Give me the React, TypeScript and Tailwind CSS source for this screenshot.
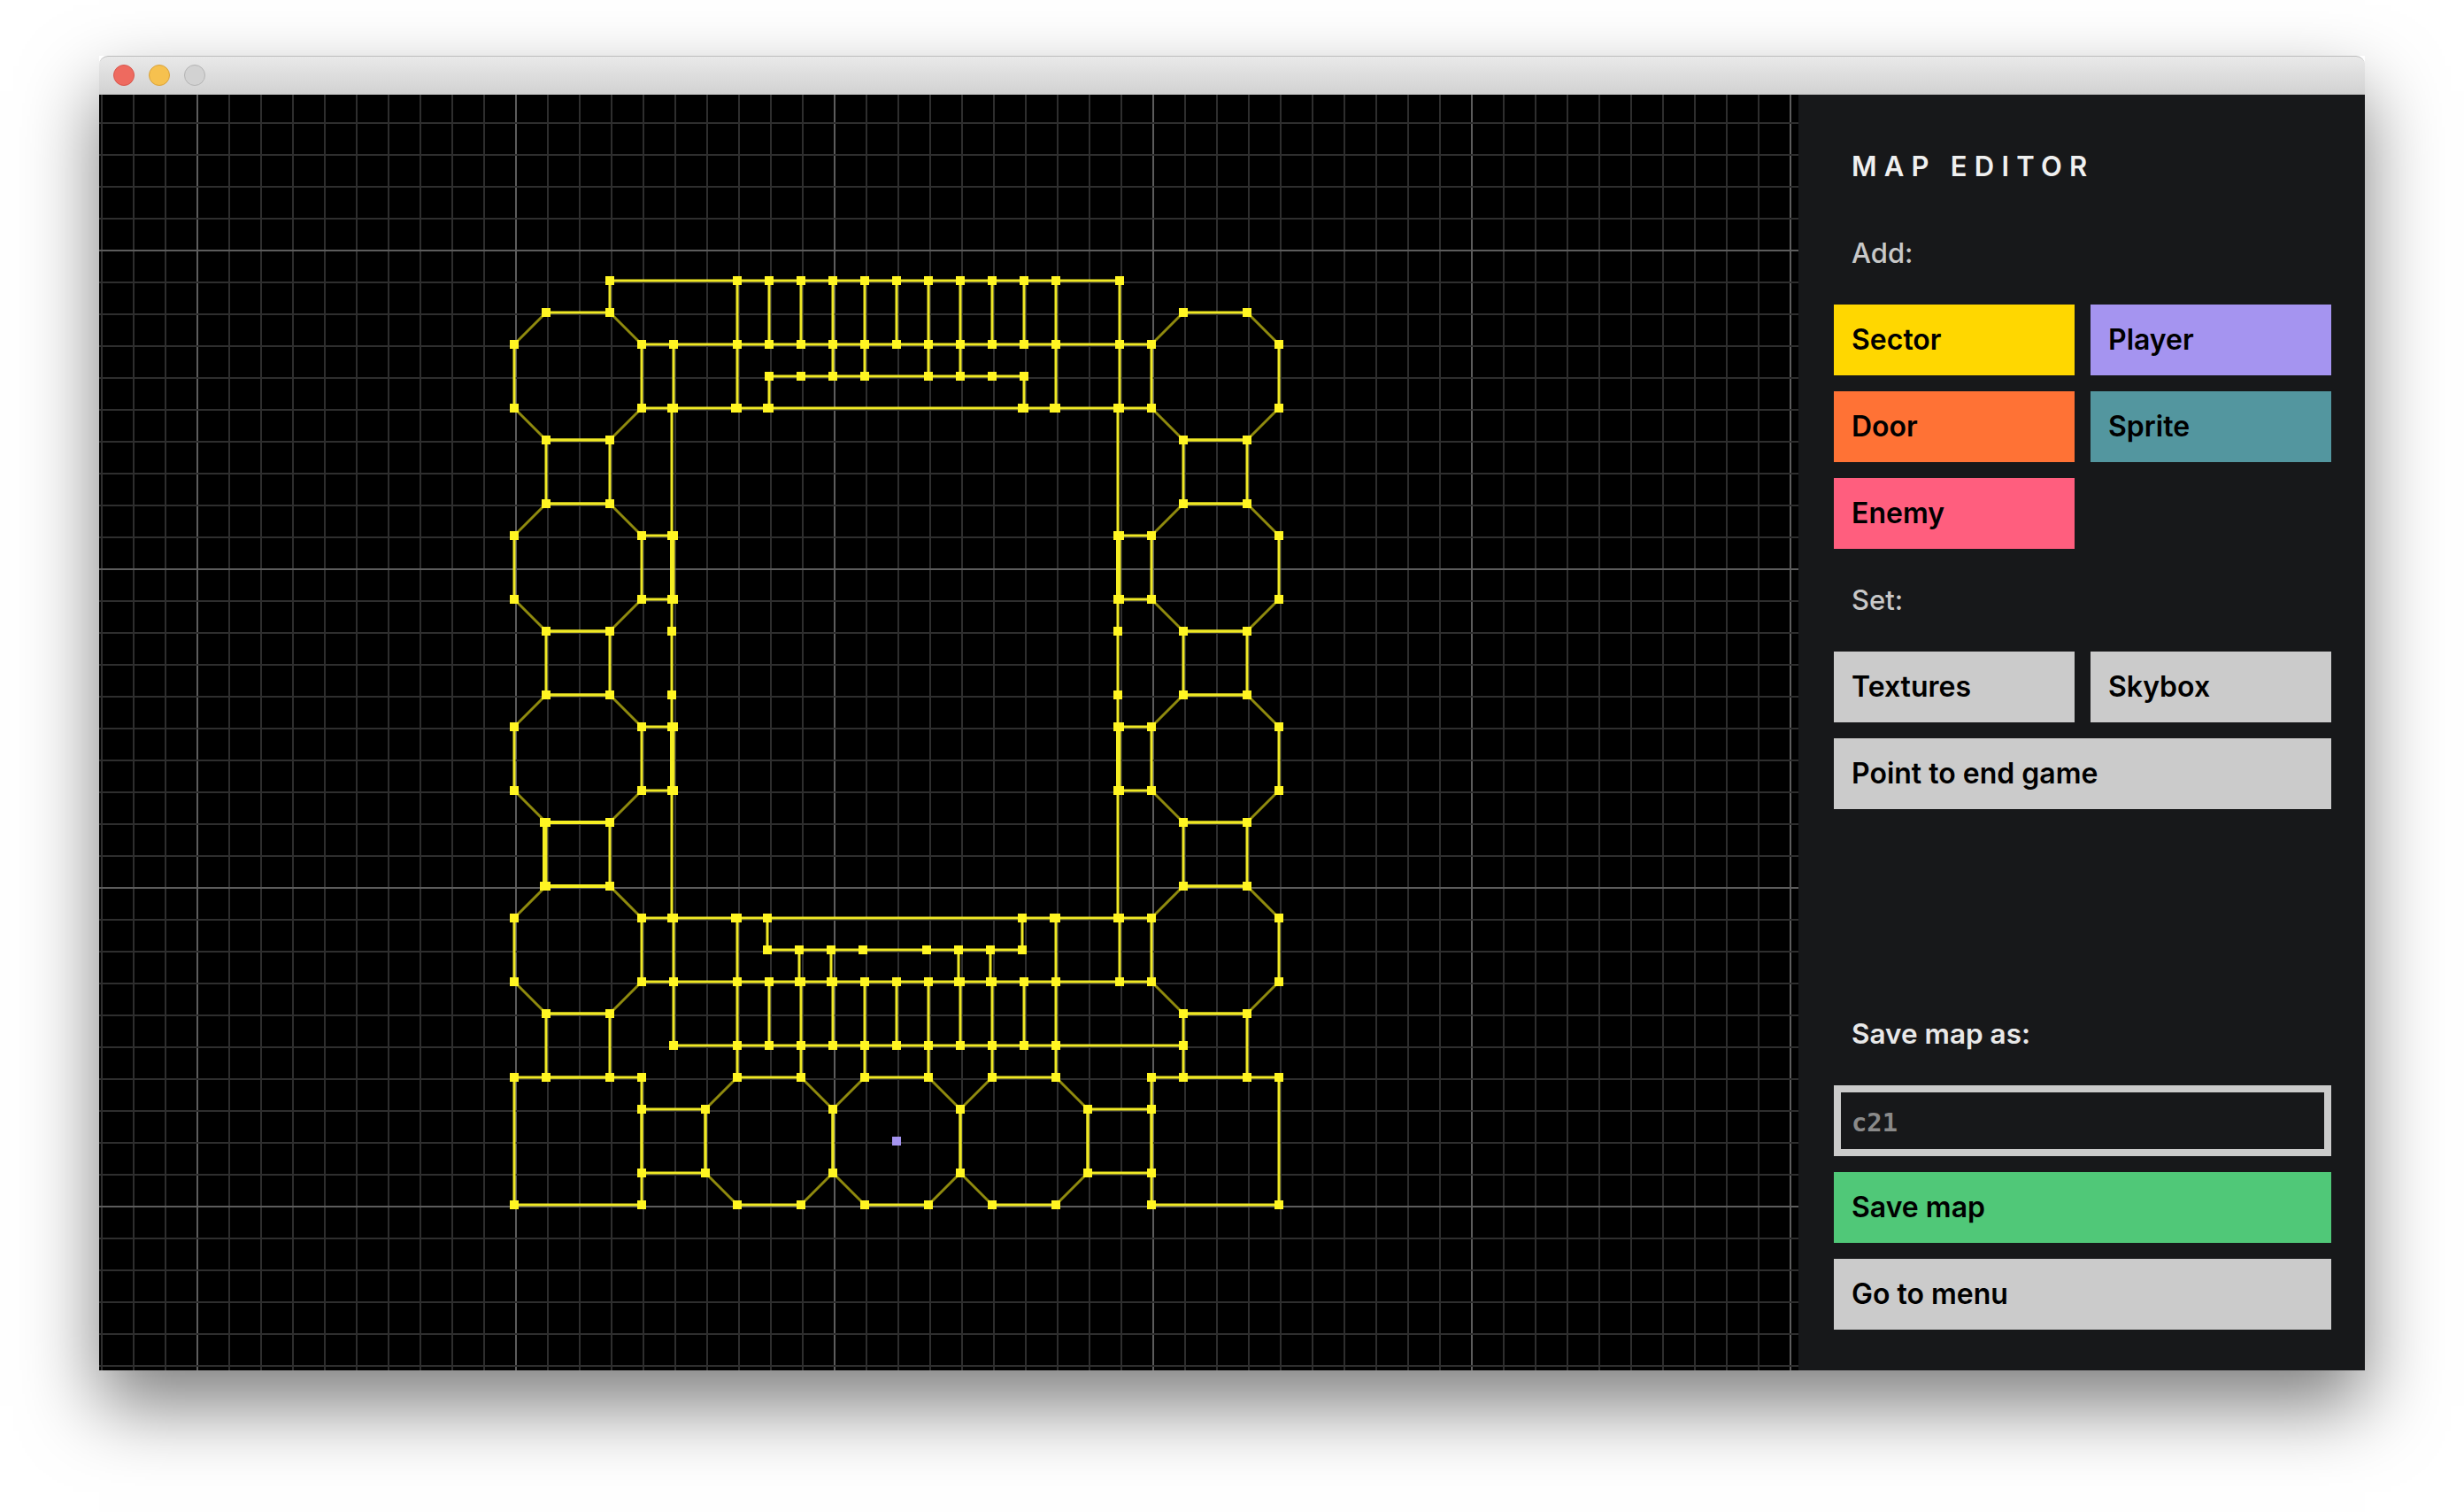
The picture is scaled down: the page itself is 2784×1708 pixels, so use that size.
const X = (i: number) => 581 + 36 * i
const Y = (j: number) => 317 + 36 * j

// the doubled walls in the map sit 2px left of the grid column
const o = (i: number) => i - 2 / 36

type Pt = [number, number]

const segments: [Pt, Pt][] = []
const thick: [Pt, Pt][] = []
const vertices = new Map<string, Pt>()

function addPoint(p: Pt) {
  vertices.set(p.join(','), p)
}

function chain(points: Pt[], closed = false) {
  points.forEach((p, n) => {
    addPoint(p)
    if (n < points.length - 1) segments.push([p, points[n + 1]])
  })
  if (closed) segments.push([points[points.length - 1], points[0]])
}

function octagon(l: number, t: number) {
  chain(
    [
      [l + 1, t],
      [l + 3, t],
      [l + 4, t + 1],
      [l + 4, t + 3],
      [l + 3, t + 4],
      [l + 1, t + 4],
      [l, t + 3],
      [l, t + 1],
    ],
    true,
  )
}

function rect(l: number, t: number, w: number, h: number) {
  chain(
    [
      [l, t],
      [l + w, t],
      [l + w, t + h],
      [l, t + h],
    ],
    true,
  )
}

function row(j: number, cols: number[]) {
  chain(cols.map((i) => [i, j] as Pt))
}

const range = (a: number, b: number) => Array.from({ length: b - a + 1 }, (_, n) => a + n)

for (const t of [1, 7, 13, 19]) {
  octagon(0, t)
  octagon(20, t)
}
for (const l of [6, 10, 14]) octagon(l, 25)
for (const t of [5, 11, 17, 23]) {
  rect(1, t, 2, 2)
  rect(21, t, 2, 2)
}
rect(0, 25, 4, 4)
rect(20, 25, 4, 4)
rect(4, 26, 2, 2)
rect(18, 26, 2, 2)
thick.push([[1, 17], [3, 17]], [[1, 19], [3, 19]], [[o(1), 17], [o(1), 19]])
addPoint([o(1), 17])
addPoint([o(1), 19])

// top block
row(0, [3, ...range(7, 17), 19])
chain([[3, 0], [3, 1]])
for (const i of [...range(7, 17), 19]) chain([[i, 0], [i, 2]])
row(2, [4, 5, ...range(7, 17), 19, 20])
row(3, [8, 9, 10, 11, 13, 14, 15, 16])
for (const i of [10, 11, 13, 14]) chain([[i, 2], [i, 3]])
for (const i of [5, 7, 17, 19]) chain([[i, 2], [i, 4]])
row(4, [4, o(5), 5, o(7), 7, o(8), 8, o(16), 16, o(17), 17, o(19), 19, 20])
chain([[8, 3], [8, 4]])
chain([[16, 3], [16, 4]])

// long walls
for (const i of [5, 19]) {
  chain([4, 8, 10, 11, 13, 14, 16, 20].map((j) => [o(i), j] as Pt))
  for (const [a, b] of [[8, 10], [14, 16]]) {
    chain([[i, a], [i, b]])
    thick.push([[o(i), a], [o(i), b]])
  }
}
for (const j of [8, 10, 14, 16]) {
  row(j, [4, o(5), 5])
  row(j, [o(19), 19, 20])
}

// bottom block
row(20, [4, o(5), 5, o(7), 7, o(8), o(16), o(17), 17, o(19), 19, 20])
for (const i of [8, 16]) chain([[o(i), 20], [o(i), 21]])
row(21, [8, 9, 10, 11, 13, 14, 15, 16].map(o))
for (const i of [9, 10, 14, 15]) chain([[o(i), 21], [o(i), 22]])
row(22, [4, 5, 7, 8, o(9), 9, o(10), 10, 11, 12, 13, o(14), 14, o(15), 15, 16, 17, 19, 20])
for (const i of [5, 7, 17, 19]) chain([[i, 20], [i, 22]])
for (const i of [5, ...range(7, 17)]) chain([[i, 22], [i, 24]])
row(24, [5, ...range(7, 17), 21])
for (const i of [7, 9, 11, 13, 15, 17]) chain([[i, 24], [i, 25]])

const minorX = range(0, 53).map((n) => 115 + 36 * n)
const minorY = range(0, 39).map((n) => 139 + 36 * n)

function MapCanvas() {
  return (
    <svg className="block h-[1441px] w-[1920px] shrink-0 bg-black" viewBox="112 107 1920 1441">
      {minorX.map((x) => {
        const major = (x - 223) % 360 === 0
        return <line key={x} x1={x} x2={x} y1={107} y2={1548} stroke={major ? '#5c5c5c' : '#2e2e2e'} strokeWidth={2} />
      })}
      {minorY.map((y) => {
        const major = (y - 283) % 360 === 0
        return <line key={y} x1={112} x2={2032} y1={y} y2={y} stroke={major ? '#5c5c5c' : '#2e2e2e'} strokeWidth={2} />
      })}
      {segments.map(([a, b], n) => {
        const diagonal = a[0] !== b[0] && a[1] !== b[1]
        return (
          <line
            key={n}
            x1={X(a[0])}
            y1={Y(a[1])}
            x2={X(b[0])}
            y2={Y(b[1])}
            stroke={diagonal ? '#8f8a0e' : '#efe825'}
            strokeWidth={3}
          />
        )
      })}
      {thick.map(([a, b], n) => (
        <line key={n} x1={X(a[0])} y1={Y(a[1])} x2={X(b[0])} y2={Y(b[1])} stroke="#f5ee22" strokeWidth={4} />
      ))}
      {[...vertices.values()].map((p) => (
        <rect key={p.join(',')} x={X(p[0]) - 5} y={Y(p[1]) - 5} width={10} height={10} fill="#fff522" />
      ))}
      <rect x={1008} y={1284} width={10} height={10} fill="#a594f0" />
    </svg>
  )
}

function Btn({ label, color, wide }: { label: string; color: string; wide?: boolean }) {
  return (
    <button
      className={`h-20 px-5 text-left text-[32px] font-semibold text-black ${color} ${wide ? 'col-span-2' : ''}`}
    >
      {label}
    </button>
  )
}

export default function App() {
  return (
    <div className="h-[1708px] w-[2784px] overflow-hidden bg-white pl-[112px] pt-[63px] [font-family:Inter,sans-serif]">
      <div className="flex h-[1485px] w-[2560px] flex-col shadow-[0_40px_80px_rgba(0,0,0,0.5)]">
        <div className="flex h-11 shrink-0 items-center gap-4 rounded-t-[10px] border-t border-b border-t-[#bdbdbd] border-b-[#c0c0c0] bg-gradient-to-b from-[#e9e9e9] to-[#d2d2d2] pl-4">
          <span className="h-6 w-6 rounded-full border border-[#d8564c] bg-[#ee6a5f]" />
          <span className="h-6 w-6 rounded-full border border-[#d9a23b] bg-[#f6c14f]" />
          <span className="h-6 w-6 rounded-full border border-[#b4b4b4] bg-[#d2d2d2]" />
        </div>
        <div className="flex min-h-0 flex-1">
          <MapCanvas />
          <div className="flex w-[640px] flex-col bg-[#17181a] pb-[46px] pl-10 pr-[38px]">
            <h1 className="mt-[63px] pl-5 text-[31px] leading-9 font-semibold tracking-[0.265em] text-[#f0f0f0]">MAP EDITOR</h1>
            <p className="mt-[62px] h-9 pl-5 text-[31px] leading-9 font-medium text-[#c8c8c8]">Add:</p>
            <div className="mt-[40px] grid grid-cols-2 gap-[18px]">
              <Btn label="Sector" color="bg-[#ffd700]" />
              <Btn label="Player" color="bg-[#a594f0]" />
              <Btn label="Door" color="bg-[#ff7235]" />
              <Btn label="Sprite" color="bg-[#53969f]" />
              <Btn label="Enemy" color="bg-[#ff5e7e]" />
            </div>
            <p className="mt-10 h-9 pl-5 text-[31px] leading-9 font-medium text-[#c8c8c8]">Set:</p>
            <div className="mt-10 grid grid-cols-2 gap-[18px]">
              <Btn label="Textures" color="bg-[#cbcbcb]" />
              <Btn label="Skybox" color="bg-[#cbcbcb]" />
              <Btn label="Point to end game" color="bg-[#cbcbcb]" wide />
            </div>
            <p className="mt-auto h-9 pl-5 text-[31.5px] leading-9 font-semibold text-[#e8e8e8]">Save map as:</p>
            <input
              readOnly
              placeholder="c21"
              className="mt-10 h-20 w-full border-8 border-[#cbcbcb] bg-[#17181a] px-3 pt-1 text-[28.8px] font-bold outline-none placeholder:text-[#8a8a8a] [font-family:'DejaVu_Sans_Mono',monospace]"
            />
            <div className="mt-[18px] flex flex-col gap-[18px]">
              <Btn label="Save map" color="bg-[#50c878]" />
              <Btn label="Go to menu" color="bg-[#cbcbcb]" />
            </div>
          </div>
        </div>
      </div>
    </div>
  )
}
